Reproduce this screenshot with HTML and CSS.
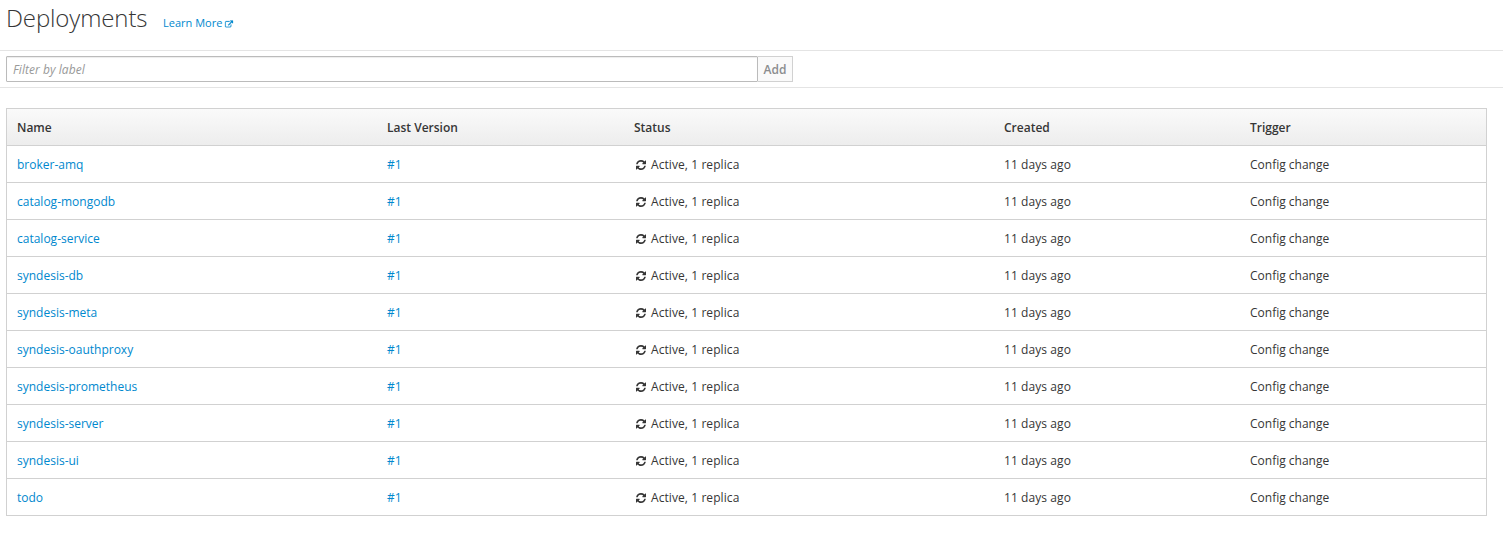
FILE: index.html
```html
<!DOCTYPE html>
<html lang="en">
<head>
<meta charset="utf-8">
<title>Deployments</title>
<link rel="stylesheet" href="styles.css">
</head>
<body>
<svg class="sprite" aria-hidden="true">
<symbol id="refresh" viewBox="0 0 1536 1536"><path d="M1511 928q0 5-1 7-64 268-268 434.500T764 1536q-146 0-282.500-55T238 1324l-129 129q-19 19-45 19t-45-19-19-45V960q0-26 19-45t45-19h448q26 0 45 19t19 45-19 45l-137 137q71 66 161 102t187 36q134 0 250-65t186-179q11-17 53-117 8-23 30-23h192q13 0 22.500 9.500t9.500 22.500zm25-800v448q0 26-19 45t-45 19h-448q-26 0-45-19t-19-45 19-45l138-138Q969 256 768 256q-134 0-250 65T332 500q-11 17-53 117-8 23-30 23H50q-13 0-22.500-9.500T18 608v-7q65-268 270-434.500T768 0q146 0 284 55.500T1297 212l130-129q19-19 45-19t45 19 19 45z"/></symbol>
</svg>
<header class="page-header">
<h1>Deployments</h1>
<a class="learn" href="#"><span>Learn More</span><svg class="external" viewBox="0 0 1792 1536"><path d="M1408 800v320q0 119-84.500 203.500T1120 1408H288q-119 0-203.500-84.500T0 1120V288Q0 169 84.500 84.500T288 0h704q14 0 23 9t9 23v64q0 14-9 23t-23 9H288q-66 0-113 47t-47 113v832q0 66 47 113t113 47h832q66 0 113-47t47-113V800q0-14 9-23t23-9h64q14 0 23 9t9 23zm384-864v512q0 26-19 45t-45 19-45-19l-176-176-652 652q-10 10-23 10t-23-10L695 855q-10-10-10-23t10-23l652-652-176-176q-19-19-19-45t19-45 45-19h512q26 0 45 19t19 45z"/></svg></a>
</header>
<div class="filter-bar"><input class="filter" type="text" placeholder="Filter by label"><button class="add" disabled>Add</button></div>
<table class="deployments">
<colgroup><col class="wide"><col class="version"><col class="wide"><col class="narrow"><col class="narrow"></colgroup>
<thead><tr><th>Name</th><th>Last Version</th><th>Status</th><th>Created</th><th>Trigger</th></tr></thead>
<tbody id="rows"></tbody>
</table>
<script src="app.js"></script>
</body>
</html>
```
FILE: styles.css
```css
* { box-sizing: border-box; }
body { margin: 0; background: #fff; color: #363636; font: 12px/20px "Open Sans", sans-serif; }
.sprite { display: none; }
a { color: #0088ce; text-decoration: none; }
.page-header { display: flex; align-items: baseline; height: 50px; padding: 5px 6px 0; }
h1 { width: 141px; margin: 0; font-size: 24px; line-height: 26px; font-weight: 300; letter-spacing: -.12px; }
.learn { display: flex; align-items: center; gap: 3px; margin-left: 16px; font-size: 11px; }
.external { width: 8px; height: 7px; margin-top: 2px; fill: currentColor; stroke: currentColor; stroke-width: 50; overflow: visible; }
.filter-bar { display: flex; height: 38px; padding: 5px 6px; border-top: 1px solid #e4e4e4; border-bottom: 1px solid #e4e4e4; }
.filter { width: 752px; height: 26px; padding: 2px 6px; border: 1px solid #bbb; border-radius: 1px; font: inherit; letter-spacing: .06px; box-shadow: inset 0 1px 1px rgba(3,3,3,.075); }
.filter::placeholder { color: #999; font-style: italic; opacity: 1; }
.add { width: 35px; height: 26px; padding: 2px 0 0; border: 1px solid #d1d1d1; border-left: 0; background: #fafafa; color: #8b8d8f; font: 600 12px/20px "Open Sans", sans-serif; }
.deployments { width: 1481px; margin: 20px 0 0 6px; table-layout: fixed; border-collapse: separate; border-spacing: 0; border: 1px solid #d1d1d1; }
.wide { width: 370px; }
.version { width: 247px; }
.narrow { width: 246px; }
th, td { padding: 9px 10px 7px; text-align: left; }
th { height: 36px; font-weight: 600; }
td { height: 37px; border-top: 1px solid #d1d1d1; }
td:nth-child(3), td:nth-child(4) { letter-spacing: .08px; }
thead { background: linear-gradient(#fafafa, #ededed); }
.status { display: flex; align-items: center; gap: 5px; padding-left: 2px; }
.refresh { width: 10px; height: 10px; fill: currentColor; }
```
FILE: app.js
```javascript
const names = ["broker-amq", "catalog-mongodb", "catalog-service", "syndesis-db", "syndesis-meta", "syndesis-oauthproxy", "syndesis-prometheus", "syndesis-server", "syndesis-ui", "todo"];
document.getElementById("rows").innerHTML = names.map(name => `<tr><td><a href="#">${name}</a></td><td><a href="#">#1</a></td><td><div class="status"><svg class="refresh"><use href="#refresh"/></svg><span>Active, 1 replica</span></div></td><td>11 days ago</td><td>Config change</td></tr>`).join("");
```
